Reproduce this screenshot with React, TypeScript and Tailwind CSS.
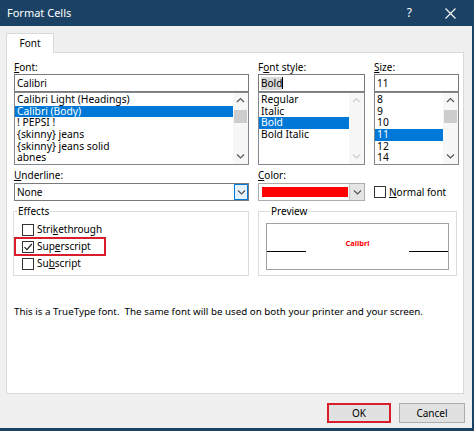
import React from "react";

const fontStack = "font-['Noto_Sans',_'Liberation_Sans',_sans-serif]";

function Acc({ children }: { children: React.ReactNode }) {
  return <span className="underline decoration-1 underline-offset-[1px]">{children}</span>;
}

function Chevron({ dir, muted }: { dir: "up" | "down"; muted?: boolean }) {
  const d = dir === "up" ? "M1 5 L4.5 1.5 L8 5" : "M1 1.5 L4.5 5 L8 1.5";
  return (
    <svg width="9" height="7" viewBox="0 0 9 7" className={muted ? "text-[#cfcfcf]" : "text-[#555]"}>
      <path d={d} fill="none" stroke="currentColor" strokeWidth="1.2" />
    </svg>
  );
}

function ScrollBar({ muted }: { muted?: boolean }) {
  return (
    <div className="w-[15px] flex flex-col bg-[#f7f7f7]">
      <div className="h-[15px] flex items-center justify-center">
        <Chevron dir="up" muted={muted} />
      </div>
      {!muted && <div className="mt-[2px] mx-[1px] h-[13px] bg-[#cdcdcd]" />}
      <div className="flex-1" />
      <div className="h-[15px] flex items-center justify-center">
        <Chevron dir="down" muted={muted} />
      </div>
    </div>
  );
}

function ListBox({ items, selected, muted }: { items: string[]; selected: number; muted?: boolean }) {
  return (
    <div className="h-[73px] border border-[#828790] bg-white flex">
      <div className="flex-1 pt-[1px] overflow-hidden text-[10.3px]">
        {items.map((it, i) => (
          <div
            key={it}
            className={
              "h-[11.7px] leading-[11.7px] pl-[2px] whitespace-nowrap " +
              (i === selected ? "bg-[#0078d7] text-white" : "text-black")
            }
          >
            {it}
          </div>
        ))}
      </div>
      <ScrollBar muted={muted} />
    </div>
  );
}

function TextBox({ children }: { children: React.ReactNode }) {
  return (
    <div className="h-[18px] border border-[#7a7a7a] bg-white flex items-center pl-[2px]">{children}</div>
  );
}

function Label({ children }: { children: React.ReactNode }) {
  return <div className="h-[14px] leading-[14px]">{children}</div>;
}

function CheckBox({ checked }: { checked?: boolean }) {
  return (
    <div className="w-[12px] h-[12px] border border-[#333] bg-white flex items-center justify-center shrink-0">
      {checked && (
        <svg width="10" height="10" viewBox="0 0 10 10">
          <path d="M1.5 5.2 L4 7.7 L8.8 2" fill="none" stroke="#222" strokeWidth="1.2" />
        </svg>
      )}
    </div>
  );
}

function Effect({ children, checked, marked }: { children: React.ReactNode; checked?: boolean; marked?: boolean }) {
  if (marked) {
    return (
      <div className="h-[19px] -my-[1px] w-[92px] border-2 border-[#d81e2a] pl-[6px] flex items-center gap-[3px]">
        <CheckBox checked={checked} />
        <span>{children}</span>
      </div>
    );
  }
  return (
    <div className="h-[17px] pl-[8px] flex items-center gap-[3px]">
      <CheckBox checked={checked} />
      <span>{children}</span>
    </div>
  );
}

export default function App() {
  return (
    <div
      className={
        "w-[474px] h-[431px] bg-[#f0f0f0] border-r-2 border-b-[3px] border-[#1b4265] flex flex-col text-[10px] text-black " +
        fontStack
      }
    >
      {/* title bar */}
      <div className="h-[26px] shrink-0 bg-[#1b4265] text-white flex items-center pl-[7px]">
        <span className="text-[11px]">Format Cells</span>
        <span className="ml-auto text-[12px] mr-[33px]">?</span>
        <svg width="11" height="11" viewBox="0 0 11 11" className="mr-[16px]">
          <path d="M0.5 0.5 L10.5 10.5 M10.5 0.5 L0.5 10.5" stroke="white" strokeWidth="1.1" />
        </svg>
      </div>

      {/* tabs */}
      <div className="pt-[7px] pl-[6px] flex">
        <div className="relative z-10 -mb-px w-[48px] h-[20px] bg-white border border-b-0 border-[#d9d9d9] flex items-center justify-center">
          Font
        </div>
      </div>

      {/* panel */}
      <div className="ml-[6px] mr-[8px] h-[342px] bg-white border border-[#d9d9d9] pl-[7px] pt-[7px]">
        <div className="grid grid-cols-[235px_107px_85px] gap-x-[9px]">
          <div className="flex flex-col">
            <Label>
              <Acc>F</Acc>ont:
            </Label>
            <TextBox>Calibri</TextBox>
            <ListBox
              items={["Calibri Light (Headings)", "Calibri (Body)", "! PEPSI !", "{skinny} jeans", "{skinny} jeans solid", "abnes"]}
              selected={1}
            />
          </div>
          <div className="flex flex-col">
            <Label>
              F<Acc>o</Acc>nt style:
            </Label>
            <TextBox>
              <span className="bg-[#d9d9d9] leading-[13px]">Bold</span>
              <span className="w-px h-[12px] bg-black" />
            </TextBox>
            <ListBox items={["Regular", "Italic", "Bold", "Bold Italic"]} selected={2} muted />
          </div>
          <div className="flex flex-col">
            <Label>
              <Acc>S</Acc>ize:
            </Label>
            <TextBox>11</TextBox>
            <ListBox items={["8", "9", "10", "11", "12", "14"]} selected={3} />
          </div>

          {/* underline / color / normal font */}
          <div className="flex flex-col mt-[3px]">
            <Label>
              <Acc>U</Acc>nderline:
            </Label>
            <div className="mt-[1px] h-[18px] border border-[#7a7a7a] bg-white flex">
              <div className="flex-1 pl-[2px] flex items-center">None</div>
              <div className="w-[14px] border border-[#0078d7] bg-[#e5f1fb] flex items-center justify-center">
                <Chevron dir="down" />
              </div>
            </div>
          </div>
          <div className="flex flex-col mt-[3px]">
            <Label>
              <Acc>C</Acc>olor:
            </Label>
            <div className="mt-[1px] h-[18px] border border-[#adadad] bg-white flex items-center pl-[3px]">
              <div className="w-[86px] h-[10px] bg-[#ff0000]" />
              <div className="ml-auto w-[15px] h-full bg-[#e5e5e5] border-l border-[#c8c8c8] flex items-center justify-center">
                <Chevron dir="down" />
              </div>
            </div>
          </div>
          <div className="flex flex-col mt-[3px]">
            <div className="h-[14px]" />
            <div className="mt-[1px] h-[18px] flex items-center gap-[3px]">
              <CheckBox />
              <span>
                <Acc>N</Acc>ormal font
              </span>
            </div>
          </div>

          {/* effects */}
          <fieldset className="mt-[3px] -ml-px border border-[#dcdcdc] pb-[3px]">
            <legend className="ml-[3px] px-[1px] leading-[14px]">Effects</legend>
            <div className="mt-[3px] flex flex-col">
              <Effect>
                Stri<Acc>k</Acc>ethrough
              </Effect>
              <Effect checked marked>
                Sup<Acc>e</Acc>rscript
              </Effect>
              <Effect>
                Su<Acc>b</Acc>script
              </Effect>
            </div>
          </fieldset>

          {/* preview */}
          <fieldset className="col-span-2 mt-[3px] mr-[2px] border border-[#dcdcdc] px-[7px] pb-[3px] flex flex-col">
            <legend className="ml-[4px] px-[1px] leading-[14px]">Preview</legend>
            <div className="mt-[5px] h-[47px] border border-[#a0a0a0] bg-white flex flex-col">
              <div className="h-[28px] flex items-end">
                <div className="flex-1 h-px bg-black" />
                <div className="w-[103px] text-center text-[7.5px] font-bold text-[#ff0000] leading-[8px] pb-[5px]">
                  Calibri
                </div>
                <div className="flex-1 h-px bg-black" />
              </div>
            </div>
          </fieldset>
        </div>

        <div className="mt-[29px] leading-[14px] text-[9.8px]">
          This is a TrueType font.&nbsp; The same font will be used on both your printer and your screen.
        </div>
      </div>

      {/* buttons */}
      <div className="mt-[9px] pr-[7px] flex justify-end gap-[8px]">
        <button className="w-[64px] h-[20px] bg-[#e1e1e1] border-2 border-[#d81e2a] flex items-center justify-center">
          OK
        </button>
        <button className="w-[66px] h-[20px] bg-[#e1e1e1] border border-[#adadad] flex items-center justify-center">
          Cancel
        </button>
      </div>
    </div>
  );
}
